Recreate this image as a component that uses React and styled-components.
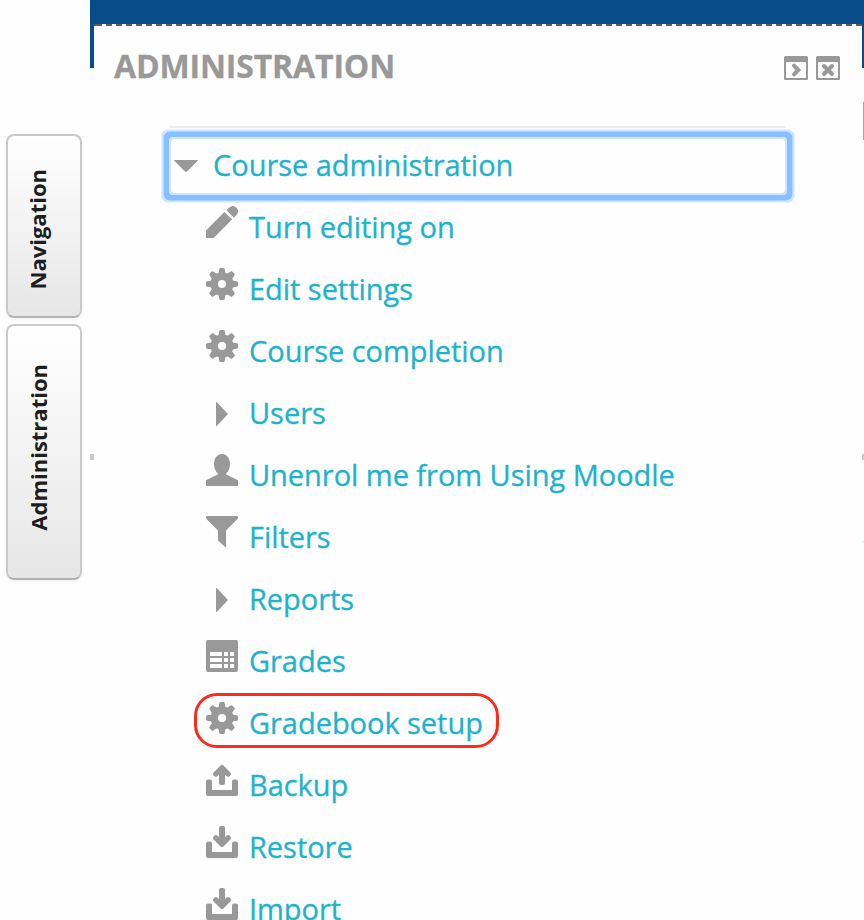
import React from "react";
import styled, { createGlobalStyle } from "styled-components";

const GlobalStyle = createGlobalStyle`
  *, *::before, *::after { box-sizing: border-box; }
  body { margin: 0; background: #fefefe; font-family: "Open Sans", sans-serif; }
`;

const Page = styled.div`
  width: 864px;
  height: 920px;
  overflow: hidden;
  display: grid;
  grid-template-columns: 90px 774px;
  background: #fefefe;
`;

const Dock = styled.nav`
  display: flex;
  flex-direction: column;
  gap: 6px;
  padding: 134px 0 0 6px;
`;

const DockTab = styled.button`
  flex: none;
  width: 76px;
  height: ${(p) => p.$height}px;
  padding: ${(p) => p.$padding};
  display: flex;
  align-items: center;
  justify-content: center;
  border: 2px solid #cacaca;
  border-bottom-color: #b3b3b3;
  border-radius: 8px;
  background: linear-gradient(#ffffff, #e6e6e6);
  box-shadow: 0 2px 4px rgba(0, 0, 0, 0.05);
  font-family: inherit;
`;

const DockLabel = styled.span`
  writing-mode: vertical-rl;
  transform: rotate(180deg);
  font-size: 22px;
  line-height: 30px;
  font-weight: 700;
  color: #1d1e22;
  white-space: nowrap;
  text-shadow: 0 -1px 1px #fff;
`;

const Panel = styled.main`
  position: relative;
  height: 920px;
  overflow: hidden;
`;

const TopBar = styled.div`
  height: 24px;
  background: #084c8a;
`;

const DashedRule = styled.div`
  height: 2px;
  margin: 0 2px 0 4px;
  border-left: 2px solid #5b5e64;
  background: repeating-linear-gradient(90deg, #5b5e64 0 6px, #fefefe 6px 10px);
`;

const Edge = styled.div`
  position: absolute;
  top: ${(p) => p.$top}px;
  ${(p) => p.$side}: 0;
  width: ${(p) => p.$width}px;
  height: ${(p) => p.$height}px;
  background: ${(p) => p.$color};
`;

const Header = styled.header`
  display: flex;
  align-items: center;
  justify-content: space-between;
  height: 80px;
  padding: 0 24px 0 24px;
`;

const Title = styled.h2`
  margin: 0;
  font-size: 32px;
  line-height: 44px;
  letter-spacing: -0.15px;
  font-weight: 700;
  color: #999;
  -webkit-text-stroke: 0.3px #999;
`;

const Actions = styled.div`
  display: flex;
  gap: 8px;
  padding-top: 4px;
`;

const Tree = styled.div`
  width: 616px;
  margin: 20px 0 0 80px;
  border-top: 2px solid #ececec;
`;

const Branch = styled.div`
  height: 54px;
  margin: 11px 1px 3px;
  padding: 0 0 3px 3px;
  display: flex;
  align-items: center;
  gap: 15px;
  box-shadow: 0 0 0 2px #d0e5fd, 0 0 0 7.4px #88c0ff, 0 0 0 9.6px #cfe5ff;
  border-radius: 2px;
`;

const Items = styled.ul`
  margin: 0;
  padding: 0 0 0 36px;
  list-style: none;
`;

const Item = styled.li`
  position: relative;
  height: 62px;
  display: flex;
  align-items: center;
  gap: 11px;

  &::after {
    content: "";
    display: ${(p) => (p.$marked ? "block" : "none")};
    position: absolute;
    left: -12px;
    top: 1px;
    width: 305px;
    height: 55px;
    border: 3px solid #fb2c1e;
    border-radius: 23px;
  }
`;

const Link = styled.a`
  font-size: 29px;
  line-height: 62px;
  letter-spacing: -0.04px;
  color: #20b2cc;
  -webkit-text-stroke: 0.3px #20b2cc;
  white-space: nowrap;
`;

const Icon = styled.svg`
  flex: none;
  display: block;
  overflow: visible;
  fill: #999;
  margin-bottom: ${(p) => p.$lift || 0}px;
`;

const teeth = [0, 45, 90, 135, 180, 225, 270, 315];

const drawings = {
  pencil: (
    <>
      <path d="M0 24.5 18.5 6l7.5 7.5L7.5 32H0z" />
      <path d="M20.5 4.2 23 1.700Q27-1.700 30.500 1.700T30.300 9L28 11.700z" />
    </>
  ),
  gear: (
    <>
      <path
        fillRule="evenodd"
        d="M16 4.5a11.5 11.5 0 1 0 0 23 11.5 11.5 0 0 0 0-23zm0 7.5a4 4 0 1 1 0 8 4 4 0 0 1 0-8z"
      />
      {teeth.map((angle) => (
        <path
          key={angle}
          transform={`rotate(${angle} 16 16)`}
          d="M11.5 6.5 12.7 4.6 13.3 1Q13.5 0 14.4 0h3.2Q18.5 0 18.7 1l.6 3.6 1.2 1.900z"
        />
      ))}
    </>
  ),
  closed: <path d="M10 10.500Q10 9.500 11 10.300L22 22 11 33.700Q10 34.500 10 33.500z" />,
  user: (
    <path d="M16 0c4.800 0 8 4.400 8 10 0 4.200-1.500 7.600-3.800 9.200v1.200L32 26.300V32H0v-5.700l11.800-5.900v-1.200C9.500 17.600 8 14.200 8 10 8 4.400 11.200 0 16 0z" />
  ),
  filter: (
    <path d="M1.200 0h29.600Q32 0 32 1.200v1.300L20 14.500V31.700L12 24.500V14.500L0 2.500V1.200Q0 0 1.200 0z" />
  ),
  grid: (
    <path
      fillRule="evenodd"
      d="M2 0h28q2 0 2 2v28q0 2-2 2H2q-2 0-2-2V2Q0 0 2 0zM4 12v4h12v-4zm14 0v4h4v-4zm6 0v4h4v-4zM4 18v4h12v-4zm14 0v4h4v-4zm6 0v4h4v-4zM4 24v4h12v-4zm14 0v4h4v-4zm6 0v4h4v-4z"
    />
  ),
  up: (
    <>
      <Tray />
      <path d="M14.800 1.300Q16 .3 17.200 1.300L24.700 8.800Q25.500 10 24.500 11.500L23.500 12.300Q22 13.300 20.800 12.300L19 10.800V19q0 2-2 2h-2q-2 0-2-2V10.800L11.200 12.300Q10 13.300 8.500 12.300L7.500 11.500Q6.500 10 7.300 8.800z" />
    </>
  ),
  down: (
    <>
      <Tray />
      <path d="M14.800 20.700Q16 21.500 17.200 20.700L24.700 13.200Q25.500 12 24.500 10.500L23.500 9.500Q22 8.500 20.800 9.500L19 11V2q0-2-2-2h-2q-2 0-2 2v9L11.200 9.500Q10 8.500 8.500 9.500L7.500 10.500Q6.500 12 7.300 13.200z" />
    </>
  ),
};

function Tray() {
  return <path d="M0 17.500Q0 15.500 2 15.500h2q2 0 2 2V26h20v-8.500q0-2 2-2h2q2 0 2 2V30q0 2-2 2H2q-2 0-2-2z" />;
}

const items = [
  ["pencil", "Turn editing on"],
  ["gear", "Edit settings"],
  ["gear", "Course completion"],
  ["closed", "Users"],
  ["user", "Unenrol me from Using Moodle"],
  ["filter", "Filters"],
  ["closed", "Reports"],
  ["grid", "Grades"],
  ["gear", "Gradebook setup", true],
  ["up", "Backup"],
  ["down", "Restore"],
  ["down", "Import"],
];

function WindowIcon({ children }) {
  return (
    <Icon width="24" height="24" viewBox="0 0 24 24">
      <path
        fillRule="evenodd"
        d="M1.500 0h21Q24 0 24 1.500v21q0 1.500-1.500 1.500h-21Q0 24 0 22.500v-21Q0 0 1.500 0zM3 6Q2 6 2 7v14q0 1 1 1h18q1 0 1-1V7q0-1-1-1z"
      />
      {children}
    </Icon>
  );
}

export default function App() {
  return (
    <Page>
      <GlobalStyle />
      <Dock>
        <DockTab $height={184} $padding="6px 14px 0 0">
          <DockLabel>Navigation</DockLabel>
        </DockTab>
        <DockTab $height={256} $padding="0 12px 9px 0">
          <DockLabel>Administration</DockLabel>
        </DockTab>
      </Dock>
      <Panel>
        <TopBar />
        <DashedRule />
        <Edge $side="left" $top={24} $width={4} $height={44} $color="#084c8a" />
        <Edge $side="right" $top={24} $width={2} $height={44} $color="#084c8a" />
        <Edge $side="right" $top={102} $width={1} $height={38} $color="#8fa9c9" />
        <Edge $side="left" $top={454} $width={4} $height={6} $color="#cacaca" />
        <Edge $side="right" $top={454} $width={2} $height={6} $color="#cacaca" />
        <Edge $side="right" $top={541} $width={2} $height={2} $color="#d3f7ff" />
        <Header>
          <Title>ADMINISTRATION</Title>
          <Actions>
            <WindowIcon>
              <path d="m10 9.700 4.300 4.300-4.300 4.300" fill="none" stroke="#999" strokeWidth="4" strokeLinecap="round" />
            </WindowIcon>
            <WindowIcon>
              <path d="m8 10 8 8m0-8-8 8" fill="none" stroke="#999" strokeWidth="4" strokeLinecap="round" />
            </WindowIcon>
          </Actions>
        </Header>
        <Tree>
          <Branch>
            <Icon width="24" height="12" viewBox="0 0 24 12" $lift={-2}>
              <path d="M.5 0h23q.8 0 .2.800L13 11.500q-1 .8-2 0L.3.800Q-.3 0 .5 0z" />
            </Icon>
            <Link>Course administration</Link>
          </Branch>
          <Items>
            {items.map(([icon, label, marked]) => (
              <Item key={label} $marked={marked}>
                <Icon width="32" height="32" viewBox="0 0 32 32" $lift={10}>
                  {drawings[icon]}
                </Icon>
                <Link>{label}</Link>
              </Item>
            ))}
          </Items>
        </Tree>
      </Panel>
    </Page>
  );
}
